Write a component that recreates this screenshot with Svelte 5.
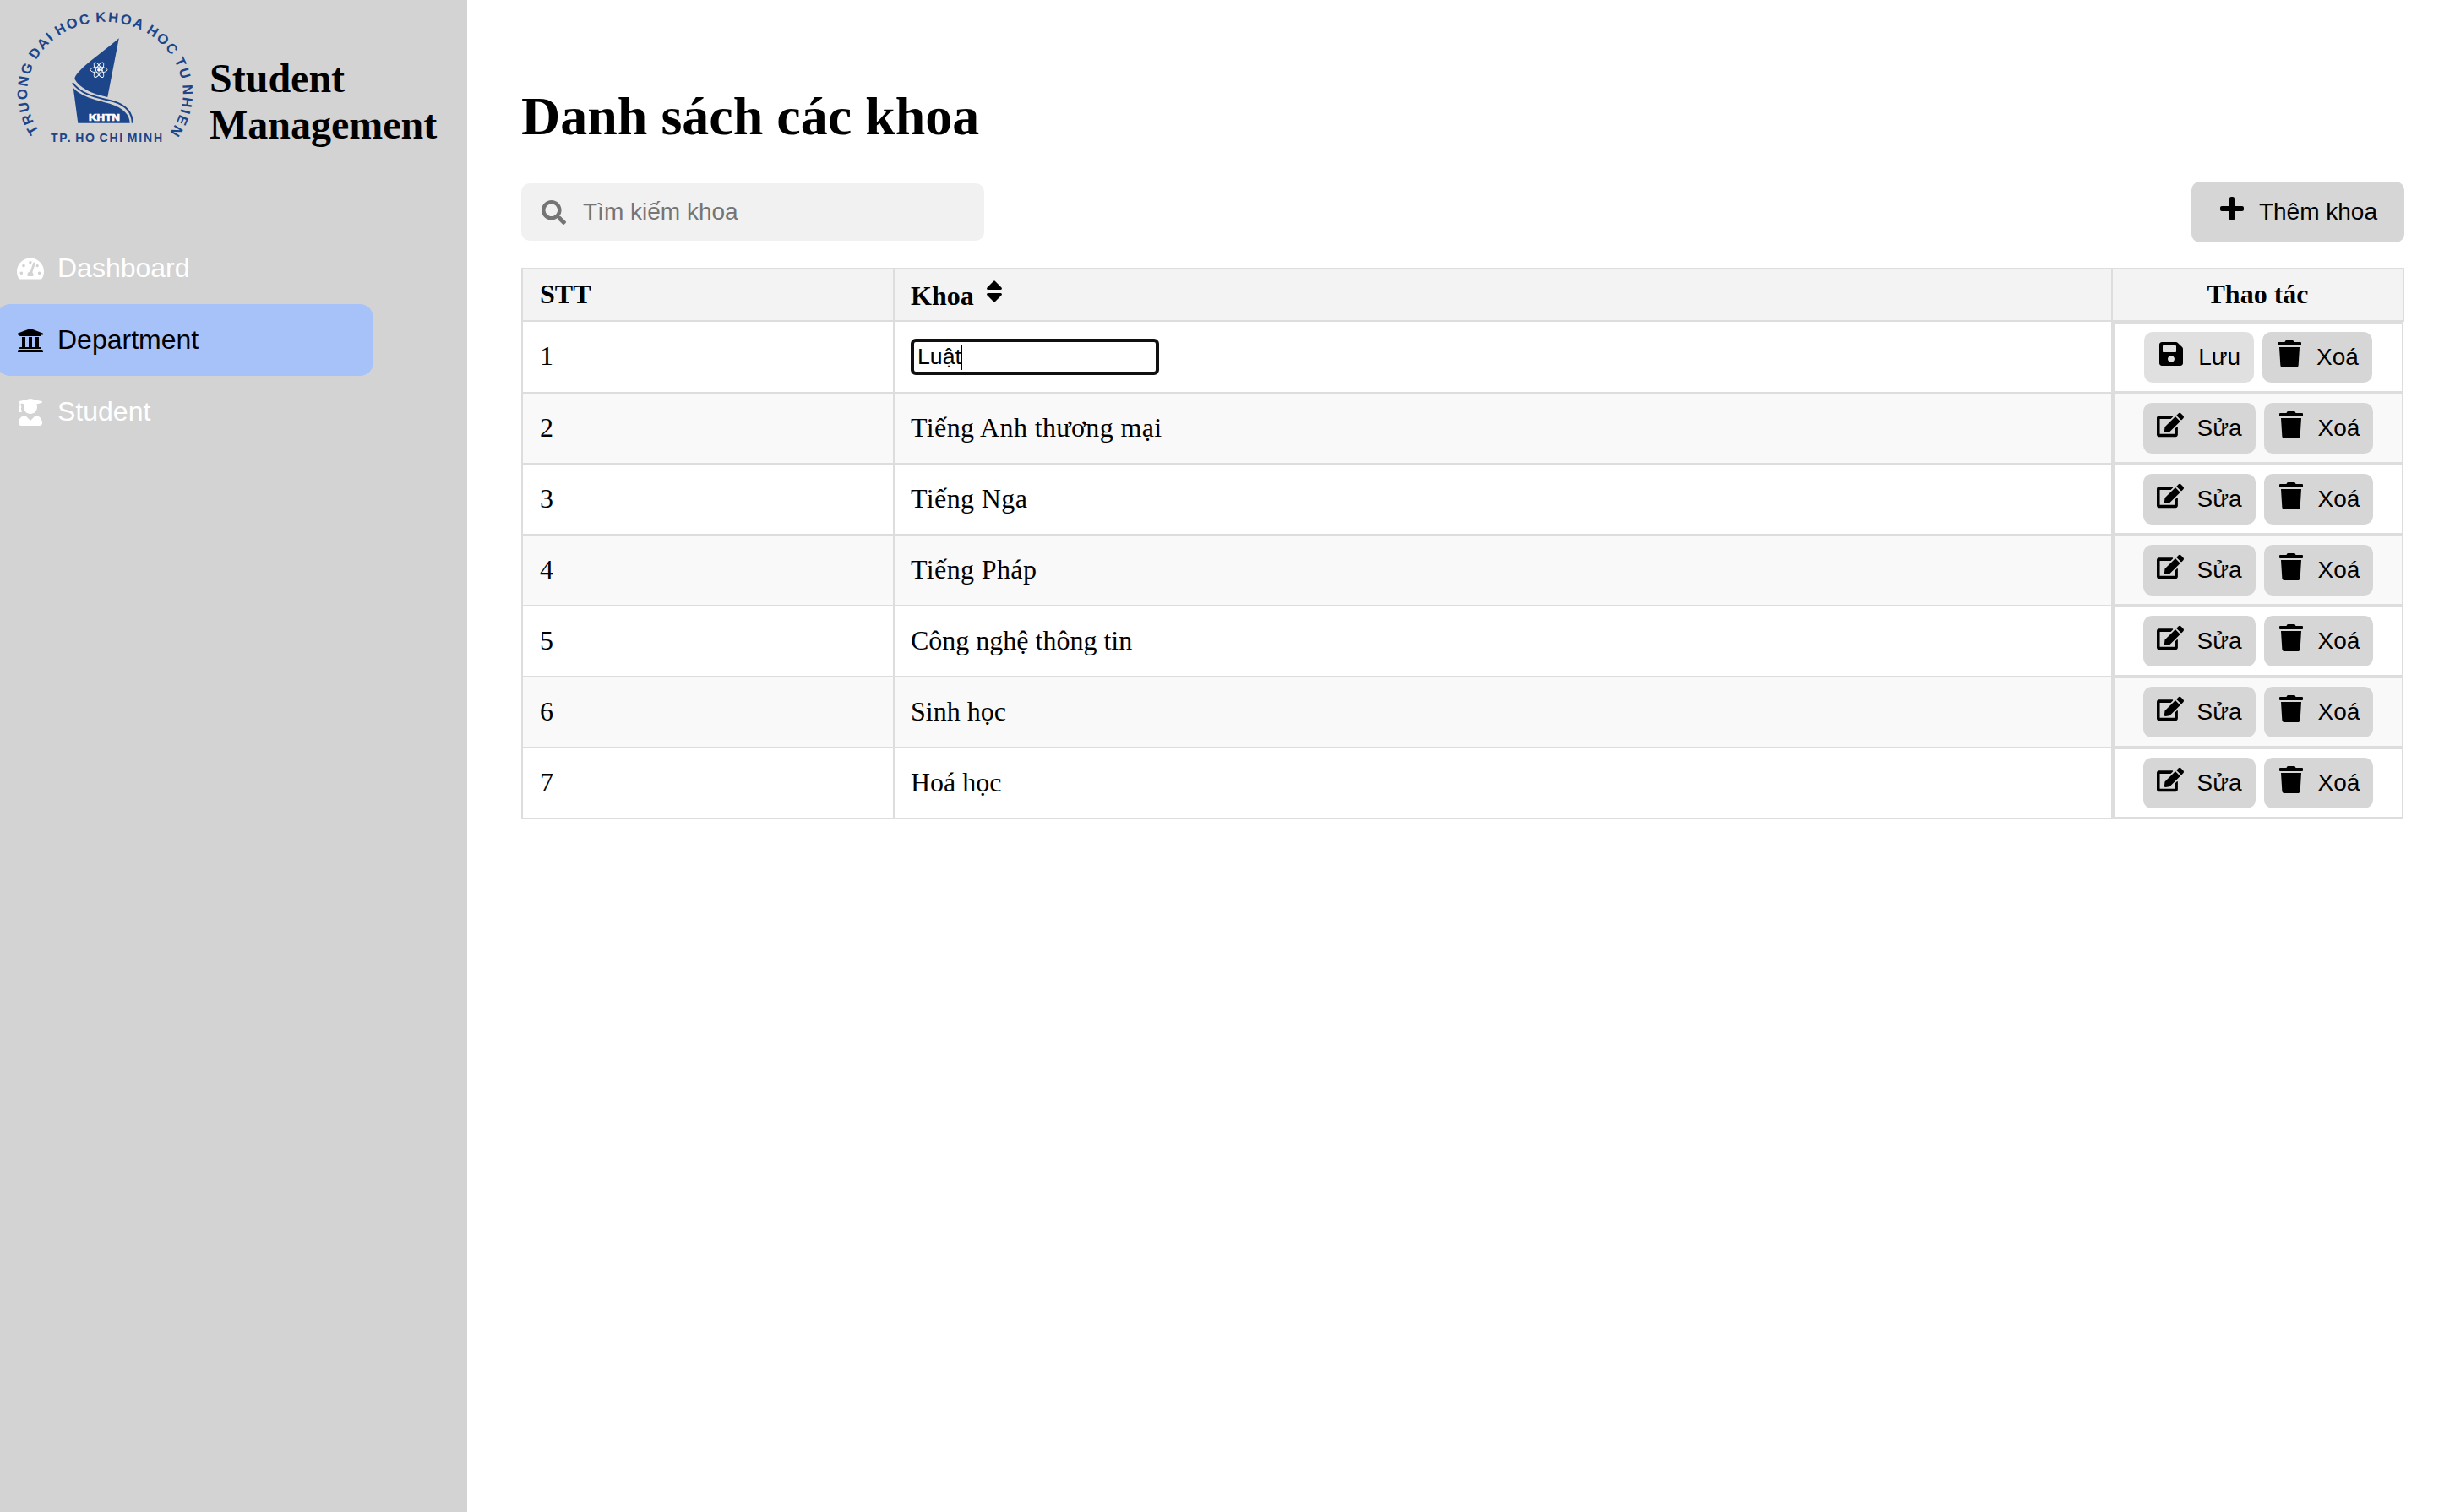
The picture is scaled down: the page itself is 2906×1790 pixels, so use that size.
<script>
  const icons = {
    gauge: ['0 0 576 512', 'M288 32C128.94 32 0 160.94 0 320c0 52.8 14.25 102.26 39.06 144.8 5.61 9.62 16.3 15.2 27.44 15.2h443c11.14 0 21.83-5.58 27.44-15.2C561.75 422.26 576 372.8 576 320c0-159.06-128.94-288-288-288zm0 64c14.71 0 26.58 10.13 30.32 23.65-1.11 2.26-2.64 4.23-3.45 6.67l-9.22 27.67c-5.13 3.49-10.97 6.01-17.64 6.01-17.67 0-32-14.33-32-32S270.33 96 288 96zM96 384c-17.67 0-32-14.33-32-32s14.33-32 32-32 32 14.33 32 32-14.33 32-32 32zm48-160c-17.67 0-32-14.33-32-32s14.33-32 32-32 32 14.33 32 32-14.33 32-32 32zm246.77-72.41l-61.33 184C343.13 347.33 352 364.54 352 384c0 11.72-3.38 22.55-8.88 32H232.88c-5.5-9.45-8.88-20.28-8.88-32 0-33.94 26.5-61.43 59.9-63.59l61.34-184.01c4.17-12.56 17.73-19.45 30.36-15.17 12.57 4.19 19.35 17.79 15.17 30.36zm14.66 57.2l15.52-46.55c3.47-1.29 7.13-2.23 11.05-2.23 17.67 0 32 14.33 32 32s-14.33 32-32 32c-11.38-.01-20.89-6.28-26.57-15.22zM480 384c-17.67 0-32-14.33-32-32s14.33-32 32-32 32 14.33 32 32-14.33 32-32 32z'],
    university: ['0 0 512 512', 'M496 128v16a8 8 0 0 1-8 8h-24v12c0 6.627-5.373 12-12 12H60c-6.627 0-12-5.373-12-12v-12H24a8 8 0 0 1-8-8v-16a8 8 0 0 1 4.941-7.392l232-88a7.996 7.996 0 0 1 6.118 0l232 88A8 8 0 0 1 496 128zm-24 304H40c-13.255 0-24 10.745-24 24v16a8 8 0 0 0 8 8h464a8 8 0 0 0 8-8v-16c0-13.255-10.745-24-24-24zM96 192v192H60c-6.627 0-12 5.373-12 12v20h416v-20c0-6.627-5.373-12-12-12h-36V192h-64v192h-64V192h-64v192h-64V192H96z'],
    graduate: ['0 0 448 512', 'M319.4 320.6L224 416l-95.4-95.4C57.1 323.7 0 382.2 0 454.4v9.6c0 26.5 21.5 48 48 48h352c26.5 0 48-21.5 48-48v-9.6c0-72.2-57.1-130.7-128.6-133.8zM13.6 79.8l6.4 1.5v58.4c-7 4.2-12 11.5-12 20.3 0 8.4 4.6 15.4 11.1 19.7L3.5 242c-1.7 6.9 2.1 14 7.6 14h41.8c5.5 0 9.3-7.1 7.6-14l-15.6-62.3C51.4 175.4 56 168.4 56 160c0-8.8-5-16.1-12-20.3V87.1l66 15.9c-8.6 17.2-14 36.4-14 57 0 70.7 57.3 128 128 128s128-57.3 128-128c0-20.6-5.3-39.8-14-57l96.3-23.2c18.2-4.4 18.2-27.1 0-31.5l-190.4-46c-13-3.1-26.7-3.1-39.7 0L13.6 48.2c-18.1 4.4-18.1 27.2 0 31.6z'],
    search: ['0 0 512 512', 'M505 442.7L405.3 343c-4.5-4.5-10.6-7-17-7H372c27.6-35.3 44-79.7 44-128C416 93.1 322.9 0 208 0S0 93.1 0 208s93.1 208 208 208c48.3 0 92.7-16.4 128-44v16.3c0 6.4 2.5 12.5 7 17l99.7 99.7c9.4 9.4 24.6 9.4 33.9 0l28.3-28.3c9.4-9.4 9.4-24.6.1-34zM208 336c-70.7 0-128-57.2-128-128 0-70.7 57.2-128 128-128 70.7 0 128 57.2 128 128 0 70.7-57.2 128-128 128z'],
    plus: ['0 0 448 512', 'M416 208H272V64c0-17.67-14.33-32-32-32h-32c-17.67 0-32 14.33-32 32v144H32c-17.67 0-32 14.33-32 32v32c0 17.67 14.33 32 32 32h144v144c0 17.67 14.33 32 32 32h32c17.67 0 32-14.33 32-32V304h144c17.67 0 32-14.33 32-32v-32c0-17.67-14.33-32-32-32z'],
    trash: ['0 0 448 512', 'M432 32H312l-9.4-18.7A24 24 0 0 0 281.1 0H166.8a23.72 23.72 0 0 0-21.4 13.3L136 32H16A16 16 0 0 0 0 48v32a16 16 0 0 0 16 16h416a16 16 0 0 0 16-16V48a16 16 0 0 0-16-16zM53.2 467a48 48 0 0 0 47.9 45h245.8a48 48 0 0 0 47.9-45L416 128H32z'],
    save: ['0 0 448 512', 'M433.941 129.941l-83.882-83.882A48 48 0 0 0 316.118 32H48C21.49 32 0 53.49 0 80v352c0 26.51 21.49 48 48 48h352c26.51 0 48-21.49 48-48V163.882a48 48 0 0 0-14.059-33.941zM224 416c-35.346 0-64-28.654-64-64 0-35.346 28.654-64 64-64s64 28.654 64 64c0 35.346-28.654 64-64 64zm96-304.52V212c0 6.627-5.373 12-12 12H76c-6.627 0-12-5.373-12-12V108c0-6.627 5.373-12 12-12h228.52c3.183 0 6.235 1.264 8.485 3.515l3.48 3.48A11.996 11.996 0 0 1 320 111.48z'],
    edit: ['0 0 576 512', 'M402.6 83.2l90.2 90.2c3.8 3.8 3.8 10 0 13.8L274.4 405.6l-92.8 10.3c-12.4 1.4-22.9-9.1-21.5-21.5l10.3-92.8L388.8 83.2c3.8-3.8 10-3.8 13.8 0zm162-22.9l-48.8-48.8c-15.2-15.2-39.9-15.2-55.2 0l-35.4 35.4c-3.8 3.8-3.8 10 0 13.8l90.2 90.2c3.8 3.8 10 3.8 13.8 0l35.4-35.4c15.2-15.3 15.2-40 0-55.2zM384 346.2V448H64V128h229.8c3.2 0 6.2-1.3 8.5-3.5l40-40c7.6-7.6 2.2-20.5-8.5-20.5H48C21.5 64 0 85.5 0 112v352c0 26.5 21.5 48 48 48h352c26.5 0 48-21.5 48-48V306.2c0-10.7-12.9-16-20.5-8.5l-40 40c-2.2 2.3-3.5 5.3-3.5 8.5z'],
    sort: ['0 0 320 512', 'M41 288h238c21.4 0 32.1 25.9 17 41L177 448c-9.4 9.4-24.6 9.4-33.9 0L24 329c-15.1-15.1-4.4-41 17-41zm255-105L177 64c-9.4-9.4-24.6-9.4-33.9 0L24 183c-15.1 15.1-4.4 41 17 41h238c21.4 0 32.1-25.9 17-41z']
  };

  const nav = [
    { label: 'Dashboard', icon: 'gauge' },
    { label: 'Department', icon: 'university' },
    { label: 'Student', icon: 'graduate' }
  ];
  const current = 'Department';

  let departments = $state([
    'Luật',
    'Tiếng Anh thương mại',
    'Tiếng Nga',
    'Tiếng Pháp',
    'Công nghệ thông tin',
    'Sinh học',
    'Hoá học'
  ]);
  const editing = 0;
</script>

{#snippet icon(name)}
  <svg class="icon" viewBox={icons[name][0]} aria-hidden="true"><path d={icons[name][1]} /></svg>
{/snippet}

<div class="app">
  <aside>
    <div class="brand">
      <svg class="logo" viewBox="0 0 240 190" role="img" aria-label="KHTN">
        <path id="ring" fill="none" d="M46.400 155.300 A92.200 84.300 0 1 1 203 154.200" />
        <text class="ring-text"><textPath href="#ring" textLength="375">TRUONG DAI HOC KHOA HOC TU NHIEN</textPath></text>
        <path d="M140.800 45.300 C125 59 109 70 98 80 C92 86 88.500 90 88.300 93.500 C94 104 108 111 127.300 115 Z" />
        <path d="M86.700 104 C98 116.500 117 118.500 132 123.500 C146 128 153.500 136 153.700 145.700 H92.300 Z" />
        <path class="wave" d="M86 98 C97 113.500 117 115.500 135 120.300 C150 125 156.500 134 156.800 145.700" />
        <g class="atom">
          <ellipse cx="117" cy="82.700" rx="10" ry="3.500" />
          <ellipse cx="117" cy="82.700" rx="10" ry="3.500" transform="rotate(60 117 82.700)" />
          <ellipse cx="117" cy="82.700" rx="10" ry="3.500" transform="rotate(120 117 82.700)" />
          <circle cx="117" cy="82.700" r="1.500" />
        </g>
        <text class="khtn" x="105" y="143" textLength="37" lengthAdjust="spacingAndGlyphs">KHTN</text>
        <text class="city" x="60" y="167.700" textLength="132">TP. HO CHI MINH</text>
      </svg>
      <h2>Student Management</h2>
    </div>
    <nav>
      {#each nav as item}
        <div class="item" class:active={item.label === current}>
          {@render icon(item.icon)}<span>{item.label}</span>
        </div>
      {/each}
    </nav>
  </aside>

  <main>
    <h1>Danh sách các khoa</h1>
    <div class="toolbar">
      <label class="search">
        {@render icon('search')}
        <input placeholder="Tìm kiếm khoa" />
      </label>
      <button class="add">{@render icon('plus')}Thêm khoa</button>
    </div>
    <table>
      <colgroup><col class="c-no" /><col /><col class="c-act" /></colgroup>
      <thead>
        <tr>
          <th class="plain">STT</th>
          <th class="name">Khoa {@render icon('sort')}</th>
          <th class="plain center">Thao tác</th>
        </tr>
      </thead>
      <tbody>
        {#each departments as name, i}
          <tr>
            <td class="plain">{i + 1}</td>
            {#if i === editing}
              <td class="name">
                <div class="edit"><span>{name}</span><i class="caret"></i></div>
              </td>
            {:else}
              <td class="name plain" class:loose={name.includes('ế')}>{name}</td>
            {/if}
            <td class="actions">
              {#if i === editing}
                <button class="saving">{@render icon('save')}Lưu</button>
              {:else}
                <button>{@render icon('edit')}Sửa</button>
              {/if}
              <button>{@render icon('trash')}Xoá</button>
            </td>
          </tr>
        {/each}
      </tbody>
    </table>
  </main>
</div>

<style>
  :global(body) {
    margin: 0;
    background: #fff;
  }
  .app {
    display: flex;
    height: 1790px;
    overflow: hidden;
    font: 32px 'Liberation Serif', 'Times New Roman', serif;
    color: #000;
  }
  .icon {
    width: 32px;
    height: 32px;
    fill: currentColor;
    flex: none;
  }
  aside {
    box-sizing: border-box;
    width: 553px;
    flex: none;
    background: #d3d3d3;
  }
  .brand {
    display: flex;
    height: 275px;
  }
  .logo {
    width: 240px;
    height: 190px;
    flex: none;
    fill: #1c458a;
    font-family: 'Liberation Sans', Arial, sans-serif;
    font-weight: bold;
  }
  .ring-text {
    font-size: 16.6px;
    word-spacing: -2px;
  }
  .wave {
    fill: none;
    stroke: #1c458a;
    stroke-width: 2;
  }
  .atom {
    fill: none;
    stroke: #fff;
    stroke-width: 0.9;
  }
  .atom circle {
    fill: #fff;
  }
  .khtn {
    font-size: 11.4px;
    fill: #fff;
    stroke: #fff;
    stroke-width: 0.7;
  }
  .city {
    font-size: 14px;
    word-spacing: -2px;
  }
  h2 {
    margin: 65px 0 0 8px;
    font-size: 48px;
    line-height: 55px;
  }
  .item {
    box-sizing: border-box;
    display: flex;
    align-items: center;
    gap: 16px;
    width: 446px;
    height: 85px;
    margin-left: -4px;
    padding-left: 24px;
    border-radius: 16px;
    font-family: 'Liberation Sans', Arial, sans-serif;
    color: #fff;
  }
  .active {
    background: #a7c2f9;
    color: #000;
  }
  main {
    flex: 1;
    padding: 101px 60px 0 64px;
  }
  h1 {
    margin: 0;
    font-size: 64px;
    line-height: 73px;
  }
  .toolbar {
    display: flex;
    justify-content: space-between;
    align-items: center;
    margin: 41px 0 30px;
  }
  .search {
    box-sizing: border-box;
    display: flex;
    align-items: center;
    gap: 20px;
    width: 548px;
    height: 68px;
    padding-left: 24px;
    border-radius: 10px;
    background: #f1f1f1;
    color: #757575;
  }
  .search .icon {
    width: 29px;
    height: 29px;
  }
  .search input {
    flex: 1;
    padding: 0;
    border: 0;
    outline: 0;
    background: none;
    font: 28px 'Liberation Sans', Arial, sans-serif;
  }
  .search input::placeholder {
    color: #757575;
  }
  button {
    display: flex;
    align-items: center;
    gap: 16px;
    height: 60px;
    padding: 0 16px;
    border: 0;
    border-radius: 10px;
    background: #d6d6d6;
    color: #000;
    font: 28px 'Liberation Sans', Arial, sans-serif;
  }
  button .icon {
    margin-bottom: 8px;
  }
  .add {
    height: 72px;
    padding: 0 32px;
  }
  .saving {
    background: #e0e0e0;
  }
  table {
    width: 100%;
    border-collapse: collapse;
    table-layout: fixed;
  }
  .c-no {
    width: 440px;
  }
  .c-act {
    width: 345px;
  }
  th,
  td {
    box-sizing: border-box;
    border: 2px solid #ddd;
    padding: 0 20px;
    text-align: left;
  }
  th {
    height: 62px;
    background: #f3f3f3;
  }
  .plain {
    padding-bottom: 2px;
  }
  .name {
    padding-left: 19px;
  }
  .loose {
    letter-spacing: 0.38px;
  }
  .center {
    text-align: center;
  }
  tbody tr:nth-child(even) {
    background: #f9f9f9;
  }
  .actions {
    display: flex;
    justify-content: center;
    align-items: center;
    gap: 10px;
    height: 84px;
    padding: 0;
  }
  .edit {
    box-sizing: border-box;
    display: flex;
    align-items: center;
    width: 294px;
    height: 43px;
    padding-left: 4px;
    border: 4px solid #101010;
    border-radius: 6px;
    background: #fff;
    font: 26.67px 'Liberation Sans', Arial, sans-serif;
  }
  .caret {
    width: 2px;
    height: 30px;
    margin-left: -1px;
    background: #000;
  }
</style>
